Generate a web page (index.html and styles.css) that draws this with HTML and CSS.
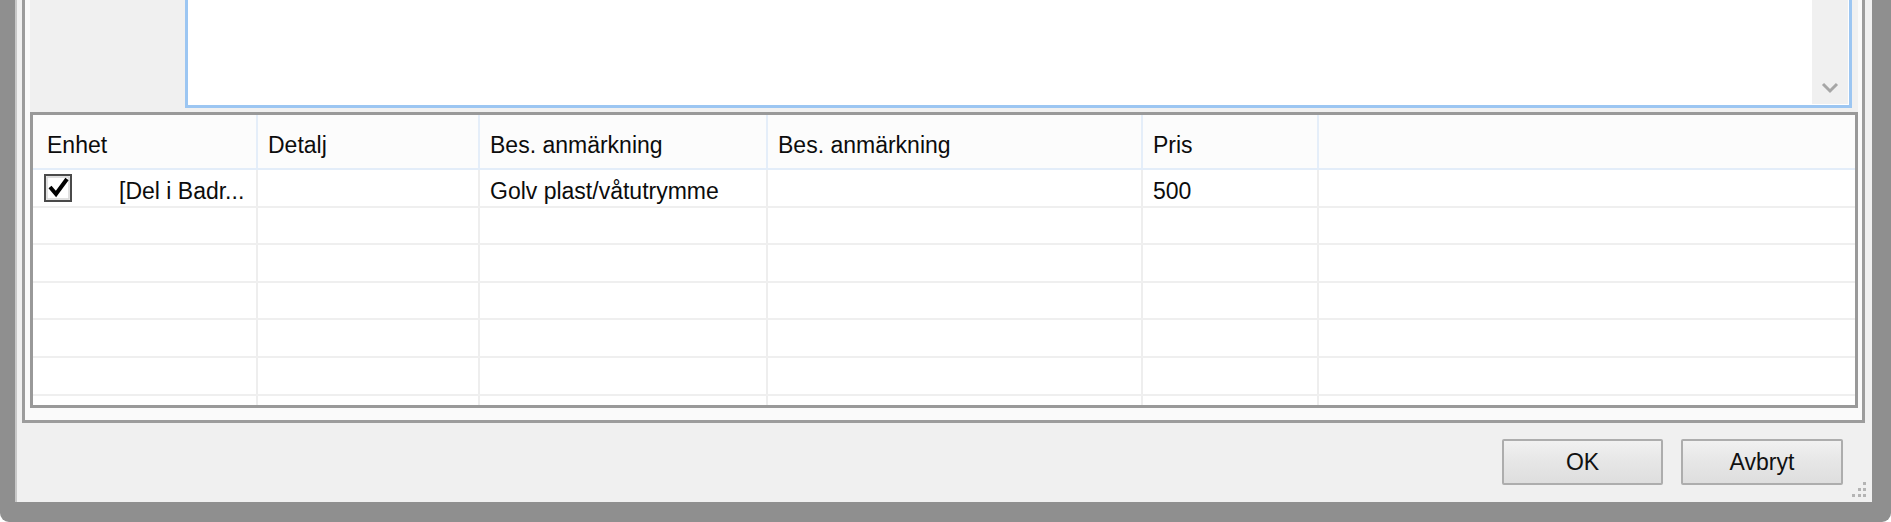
FILE: index.html
```html
<!DOCTYPE html>
<html lang="sv">
<head>
<meta charset="utf-8">
<title>Dialog</title>
<link rel="stylesheet" href="styles.css">
</head>
<body>
<div class="window">
  <div class="dialog">
    <div class="panel">
      <div class="top">
        <div class="side"></div>
        <div class="memo">
          <div class="memo-text"></div>
          <div class="vscroll">
            <svg class="chev" width="18" height="12" viewBox="0 0 18 12"><polyline points="2,2 9,9 16,2" fill="none" stroke="#a6a6a6" stroke-width="3"/></svg>
          </div>
        </div>
      </div>
      <div class="grid">
        <div class="row head">
          <div class="cell first">Enhet</div>
          <div class="cell">Detalj</div>
          <div class="cell">Bes. anmärkning</div>
          <div class="cell">Bes. anmärkning</div>
          <div class="cell">Pris</div>
          <div class="cell last"></div>
        </div>
        <div class="row">
          <div class="cell first box">
            <svg class="check" width="28" height="28" viewBox="0 0 28 28">
              <rect x="1" y="1" width="26" height="26" fill="#fff" stroke="#4a4a4a" stroke-width="2"/>
              <rect x="3" y="3" width="22" height="22" fill="none" stroke="#d6d6d6" stroke-width="1.5"/>
              <polyline points="6,13 12,20 23,5" fill="none" stroke="#000" stroke-width="4" stroke-linejoin="miter"/>
            </svg>
            <span class="node">[Del i Badr...</span>
          </div>
          <div class="cell"></div>
          <div class="cell">Golv plast/våtutrymme</div>
          <div class="cell"></div>
          <div class="cell">500</div>
          <div class="cell last"></div>
        </div>
        <div class="row"><div class="cell first"></div><div class="cell"></div><div class="cell"></div><div class="cell"></div><div class="cell"></div><div class="cell last"></div></div>
        <div class="row"><div class="cell first"></div><div class="cell"></div><div class="cell"></div><div class="cell"></div><div class="cell"></div><div class="cell last"></div></div>
        <div class="row"><div class="cell first"></div><div class="cell"></div><div class="cell"></div><div class="cell"></div><div class="cell"></div><div class="cell last"></div></div>
        <div class="row"><div class="cell first"></div><div class="cell"></div><div class="cell"></div><div class="cell"></div><div class="cell"></div><div class="cell last"></div></div>
        <div class="row"><div class="cell first"></div><div class="cell"></div><div class="cell"></div><div class="cell"></div><div class="cell"></div><div class="cell last"></div></div>
        <div class="row"><div class="cell first"></div><div class="cell"></div><div class="cell"></div><div class="cell"></div><div class="cell"></div><div class="cell last"></div></div>
      </div>
    </div>
    <div class="footer">
      <button class="btn ok">OK</button>
      <button class="btn cancel">Avbryt</button>
    </div>
    <div class="grip">
      <svg width="18" height="18" viewBox="0 0 18 18">
        <g fill="#fff">
          <rect x="15" y="2" width="2" height="2"/>
          <rect x="10" y="8" width="2" height="2"/><rect x="15" y="8" width="2" height="2"/>
          <rect x="4" y="14" width="2" height="2"/><rect x="10" y="14" width="2" height="2"/><rect x="15" y="14" width="2" height="2"/>
        </g>
        <g fill="#b4b4b4">
          <rect x="14" y="1" width="3" height="3"/>
          <rect x="9" y="7" width="3" height="3"/><rect x="14" y="7" width="3" height="3"/>
          <rect x="3" y="13" width="3" height="3"/><rect x="9" y="13" width="3" height="3"/><rect x="14" y="13" width="3" height="3"/>
        </g>
      </svg>
    </div>
  </div>
</div>
</body>
</html>
```

FILE: styles.css
```css
html, body {
  margin: 0;
  padding: 0;
  background: #ffffff;
}

body {
  font-family: "Liberation Sans", Arial, sans-serif;
  font-size: 23px;
  color: #111;
}

.window {
  width: 1891px;
  height: 522px;
  box-sizing: border-box;
  padding: 0 19px 20px 15px;
  background: #8f8f8f;
  border-radius: 0 0 9px 9px;
  display: flex;
}

.dialog {
  flex: 1;
  position: relative;
  display: flex;
  flex-direction: column;
  background: #f0f0f0;
  border-left: 2px solid #c8c8c8;
}

.panel {
  height: 423px;
  box-sizing: border-box;
  margin: 0 7px 0 5px;
  border: 3px solid #9c9c9c;
  border-top: none;
  padding: 0 4px 12px 5px;
  background: #fafafa;
  display: flex;
  flex-direction: column;
}

.top {
  height: 112px;
  flex: none;
  display: flex;
  align-items: flex-start;
  background: #f0f0f0;
}

.side {
  width: 155px;
  flex: none;
}

.memo {
  width: 1667px;
  height: 108px;
  box-sizing: border-box;
  flex: none;
  display: flex;
  background: #fff;
  border: 3px solid #9cc6f2;
  border-top: none;
  padding: 0 1px 1px 0;
}

.memo-text {
  flex: 1;
}

.vscroll {
  width: 36px;
  background: #f0f0f0;
  display: flex;
  align-items: flex-end;
  justify-content: center;
  padding-bottom: 10px;
  box-sizing: border-box;
}

.grid {
  flex: 1;
  border: 3px solid #999;
  background: #fff;
  overflow: hidden;
}

.row {
  display: grid;
  grid-template-columns: 225px 222px 288px 375px 176px 1fr;
  height: 37.6px;
  box-sizing: border-box;
  border-bottom: 2px solid #efefef;
}

.row.head {
  height: 55px;
  background: #fcfcfc;
  border-bottom: 2px solid #e3edf9;
}

.cell {
  display: flex;
  align-items: center;
  padding-left: 10px;
  padding-top: 7px;
  box-sizing: border-box;
  border-right: 2px solid #eeeeee;
  white-space: nowrap;
  overflow: hidden;
  color: #0c0c0c;
}

.head .cell {
  padding-top: 8px;
  border-right-color: #e5eef9;
}

.cell.first {
  padding-left: 11px;
}

.cell.box {
  padding-top: 0;
}

.head .cell.first {
  padding-left: 14px;
}

.cell.last {
  border-right: none;
}

.check {
  flex: none;
  display: block;
}

.node {
  margin-left: 47px;
  padding-top: 7px;
}

.footer {
  height: 79px;
  flex: none;
  display: flex;
  justify-content: flex-end;
  align-items: flex-start;
  gap: 18px;
  padding: 16px 29px 0 0;
  box-sizing: border-box;
}

.btn {
  height: 46px;
  box-sizing: border-box;
  border: 2px solid #adadad;
  border-radius: 2px;
  background: linear-gradient(#f1f1f1, #e6e6e6 50%, #dedede);
  font-family: "Liberation Sans", Arial, sans-serif;
  font-size: 23px;
  color: #111;
  padding: 0;
}

.btn.ok {
  width: 161px;
}

.btn.cancel {
  width: 162px;
}

.grip {
  position: absolute;
  right: 5px;
  bottom: 3px;
  width: 18px;
  height: 18px;
}

.grip svg {
  display: block;
}
```
